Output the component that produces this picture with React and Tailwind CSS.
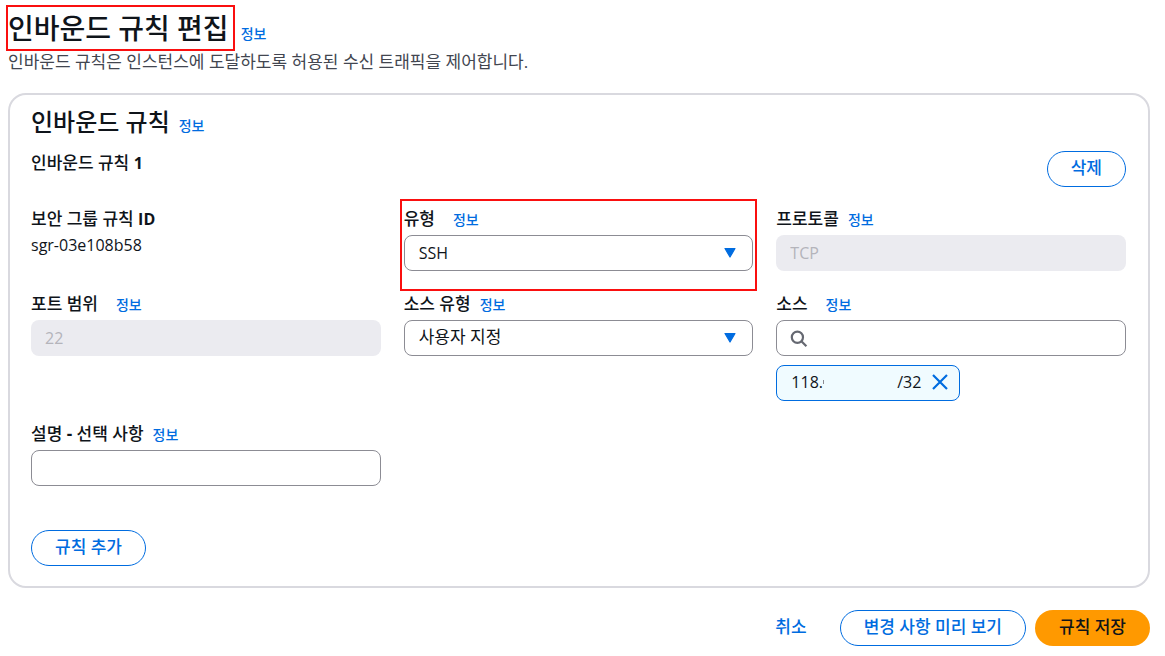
import React from 'react';

const controlBase = 'block h-9 w-full rounded-lg px-3.5 outline-none';
const controlNormal = 'border border-[#8c8c94] bg-white text-[#0f141a]';
const controlDisabled = 'bg-[#ebebf0] text-base text-[#b4b4bb]';
const outlineButton =
  'h-9 rounded-full border border-[#006ce0] bg-white px-[23px] pb-0.5 text-[17px] leading-6 font-medium text-[#006ce0]';

function InfoLink() {
  return (
    <a href="#info" className="text-sm leading-5 font-medium text-[#006ce0]">
      정보
    </a>
  );
}

function Field({ id, label, wideGap, highlighted, children }) {
  return (
    <div className="relative flex min-w-0 flex-col gap-1">
      <div className={wideGap ? 'flex items-baseline gap-[18px]' : 'flex items-baseline gap-[9px]'}>
        <label htmlFor={id} className="text-[17px] leading-6 font-medium">
          {label}
        </label>
        <InfoLink />
      </div>
      {children}
      {highlighted && (
        <span className="pointer-events-none absolute -inset-x-1 -top-2 -bottom-5 border-2 border-[#fa0f0f]" />
      )}
    </div>
  );
}

function Select({ id, options, className }) {
  return (
    <div className="relative">
      <select id={id} className={`${controlBase} ${controlNormal} appearance-none ${className}`}>
        {options.map((option) => (
          <option key={option}>{option}</option>
        ))}
      </select>
      <svg
        className="pointer-events-none absolute top-3 right-[17px] h-3 w-3"
        viewBox="0 0 12 12"
        aria-hidden="true"
      >
        <path d="M1 1.5h10L6 10z" fill="#006ce0" stroke="#006ce0" strokeWidth="1.2" strokeLinejoin="round" />
      </svg>
    </div>
  );
}

export default function App() {
  return (
    <main className="bg-white px-2 pt-1.5 pr-[15px] pb-2 font-['Open_Sans','Noto_Sans_CJK_KR',sans-serif] text-[#0f141a]">
      <header>
        <div className="flex items-baseline gap-3">
          <h1 className="relative text-[28px] leading-[44px] font-medium">
            인바운드 규칙 편집
            <span className="pointer-events-none absolute -inset-y-px -right-1.5 -left-0.5 border-2 border-[#fa0f0f]" />
          </h1>
          <InfoLink />
        </div>
        <p className="text-[17px] leading-6 text-[#424650]">
          인바운드 규칙은 인스턴스에 도달하도록 허용된 수신 트래픽을 제어합니다.
        </p>
      </header>

      <section className="mt-[19px] rounded-[18px] border-2 border-[#d9d9df] pt-[11px] pr-[22px] pb-5 pl-[21px]">
        <div className="flex items-baseline gap-[9px]">
          <h2 className="text-2xl leading-8 font-medium">인바운드 규칙</h2>
          <InfoLink />
        </div>
        <div className="mt-[13px] flex items-start justify-between">
          <h3 className="text-[17px] leading-[22px] font-medium">
            인바운드 규칙 <span className="text-base font-bold">1</span>
          </h3>
          <button type="button" className={outlineButton}>
            삭제
          </button>
        </div>

        <div className="mt-5 grid grid-cols-3 gap-x-[23px] gap-y-[21px]">
          <div>
            <div className="text-[17px] leading-6 font-medium">
              보안 그룹 규칙 <span className="text-base font-bold">ID</span>
            </div>
            <div className="mt-0.5 text-base leading-6">sgr-03e108b58</div>
          </div>
          <Field id="type" label="유형" wideGap highlighted>
            <Select id="type" options={['SSH']} className="text-base" />
          </Field>
          <Field id="protocol" label="프로토콜">
            <input id="protocol" disabled defaultValue="TCP" className={`${controlBase} ${controlDisabled}`} />
          </Field>

          <Field id="port" label="포트 범위" wideGap>
            <input id="port" disabled defaultValue="22" className={`${controlBase} ${controlDisabled}`} />
          </Field>
          <Field id="source-type" label="소스 유형">
            <Select id="source-type" options={['사용자 지정']} className="pb-0.5 text-[17px]" />
          </Field>
          <Field id="source" label="소스" wideGap>
            <div className="relative">
              <input id="source" type="text" className={`${controlBase} ${controlNormal} pl-10`} />
              <svg
                className="pointer-events-none absolute top-2.5 left-3.5 h-[18px] w-[18px]"
                viewBox="0 0 18 18"
                fill="none"
                stroke="#656871"
                strokeWidth="2.2"
                aria-hidden="true"
              >
                <circle cx="7.4" cy="7.2" r="5.6" />
                <path d="M11.4 11.2l5 5" />
              </svg>
            </div>
            <div className="mt-[5px] flex h-9 w-[184px] items-center rounded-lg border border-[#006ce0] bg-[#f0fbff] pr-2.5 pb-0.5 pl-3.5">
              <span>118.</span>
              <span className="h-1 w-px bg-[#8c8c94]" />
              <span className="ml-auto">/32</span>
              <button type="button" aria-label="118./32 삭제" className="ml-2.5 h-[18px] w-[18px]">
                <svg viewBox="0 0 18 18" fill="none" stroke="#006ce0" strokeWidth="2.2" aria-hidden="true">
                  <path d="M2 2l14 14M16 2L2 16" />
                </svg>
              </button>
            </div>
          </Field>

          <Field
            id="description"
            label={
              <>
                설명 <span className="font-bold">-</span> 선택 사항
              </>
            }
          >
            <input id="description" type="text" className={`${controlBase} ${controlNormal}`} />
          </Field>
        </div>

        <button type="button" className={`${outlineButton} mt-11`}>
          규칙 추가
        </button>
      </section>

      <div className="mt-[22px] flex items-center justify-end gap-[9px]">
        <button type="button" className="h-9 px-6 pb-0.5 text-[17px] leading-6 font-medium text-[#006ce0]">
          취소
        </button>
        <button type="button" className={outlineButton}>
          변경 사항 미리 보기
        </button>
        <button
          type="button"
          className="h-9 rounded-full bg-[#ff9900] px-6 pb-0.5 text-[17px] leading-6 font-medium text-[#0f141a]"
        >
          규칙 저장
        </button>
      </div>
    </main>
  );
}
